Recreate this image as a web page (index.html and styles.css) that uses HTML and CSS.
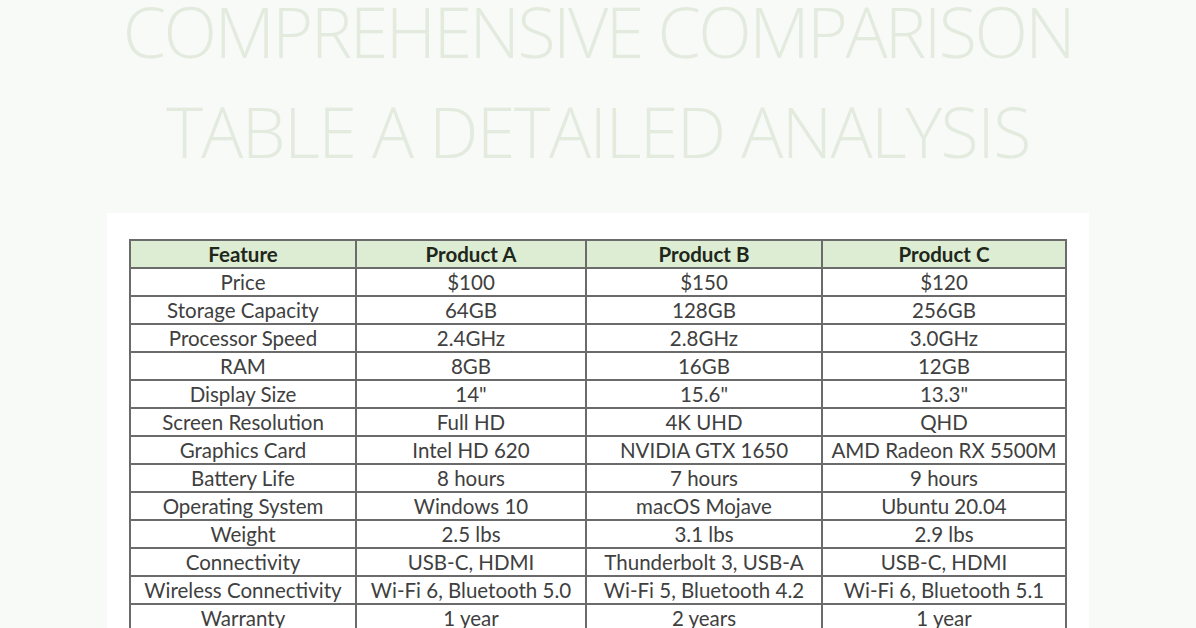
FILE: index.html
```html
<!DOCTYPE html>
<html lang="en">
<head>
<meta charset="utf-8">
<title>Comprehensive Comparison Table</title>
<link rel="stylesheet" href="styles.css">
</head>
<body>
<main class="page">
  <h1 class="title"><span class="title-line">COMPREHENSIVE COMPARISON</span><span class="title-line title-line-2">TABLE A DETAILED ANALYSIS</span></h1>
  <section class="card">
    <table class="compare">
      <colgroup>
        <col class="c1"><col class="c2"><col class="c3"><col class="c4">
      </colgroup>
      <thead>
        <tr><th>Feature</th><th>Product A</th><th>Product B</th><th>Product C</th></tr>
      </thead>
      <tbody>
        <tr><td>Price</td><td>$100</td><td>$150</td><td>$120</td></tr>
        <tr><td>Storage Capacity</td><td>64GB</td><td>128GB</td><td>256GB</td></tr>
        <tr><td>Processor Speed</td><td>2.4GHz</td><td>2.8GHz</td><td>3.0GHz</td></tr>
        <tr><td>RAM</td><td>8GB</td><td>16GB</td><td>12GB</td></tr>
        <tr><td>Display Size</td><td>14"</td><td>15.6"</td><td>13.3"</td></tr>
        <tr><td>Screen Resolution</td><td>Full HD</td><td>4K UHD</td><td>QHD</td></tr>
        <tr><td>Graphics Card</td><td>Intel HD 620</td><td>NVIDIA GTX 1650</td><td>AMD Radeon RX 5500M</td></tr>
        <tr><td>Battery Life</td><td>8 hours</td><td>7 hours</td><td>9 hours</td></tr>
        <tr><td>Operating System</td><td>Windows 10</td><td>macOS Mojave</td><td>Ubuntu 20.04</td></tr>
        <tr><td>Weight</td><td>2.5 lbs</td><td>3.1 lbs</td><td>2.9 lbs</td></tr>
        <tr><td>Connectivity</td><td>USB-C, HDMI</td><td>Thunderbolt 3, USB-A</td><td>USB-C, HDMI</td></tr>
        <tr><td>Wireless Connectivity</td><td>Wi-Fi 6, Bluetooth 5.0</td><td>Wi-Fi 5, Bluetooth 4.2</td><td>Wi-Fi 6, Bluetooth 5.1</td></tr>
        <tr><td>Warranty</td><td>1 year</td><td>2 years</td><td>1 year</td></tr>
      </tbody>
    </table>
  </section>
</main>
</body>
</html>
```

FILE: styles.css
```css
html, body {
  margin: 0;
  padding: 0;
  background: #f8faf7;
  height: 100%;
  overflow: hidden;
}

.page {
  display: flex;
  flex-direction: column;
  align-items: center;
}

.title {
  margin: 0;
  padding-top: 1px;
  display: flex;
  flex-direction: column;
  align-items: center;
  gap: 40px;
  font-family: "Open Sans", sans-serif;
  font-weight: 300;
  font-size: 70px;
  letter-spacing: -2.6px;
  color: #e3ebdf;
  white-space: nowrap;
}

.title-line {
  display: block;
  line-height: 60px;
}

.title-line-2 {
  letter-spacing: -1.6px;
}

.card {
  margin-top: 52px;
  width: 982px;
  background: #ffffff;
  padding: 26px 23px 0 23px;
  box-sizing: border-box;
  display: flex;
  justify-content: center;
}

.compare {
  border-collapse: collapse;
  width: 936px;
  table-layout: fixed;
  font-family: "Lato", "Open Sans", sans-serif;
  font-size: 20.5px;
  color: #404040;
}

.c1 { width: 226px; }
.c2 { width: 230px; }
.c3 { width: 236px; }
.c4 { width: 244px; }

.compare th,
.compare td {
  border: 2px solid #6b6b6b;
  height: 26px;
  padding: 0;
  text-align: center;
  line-height: 24px;
  white-space: nowrap;
}

.compare th {
  background: #dcedd3;
  color: #1f271b;
  font-weight: 700;
}
```
